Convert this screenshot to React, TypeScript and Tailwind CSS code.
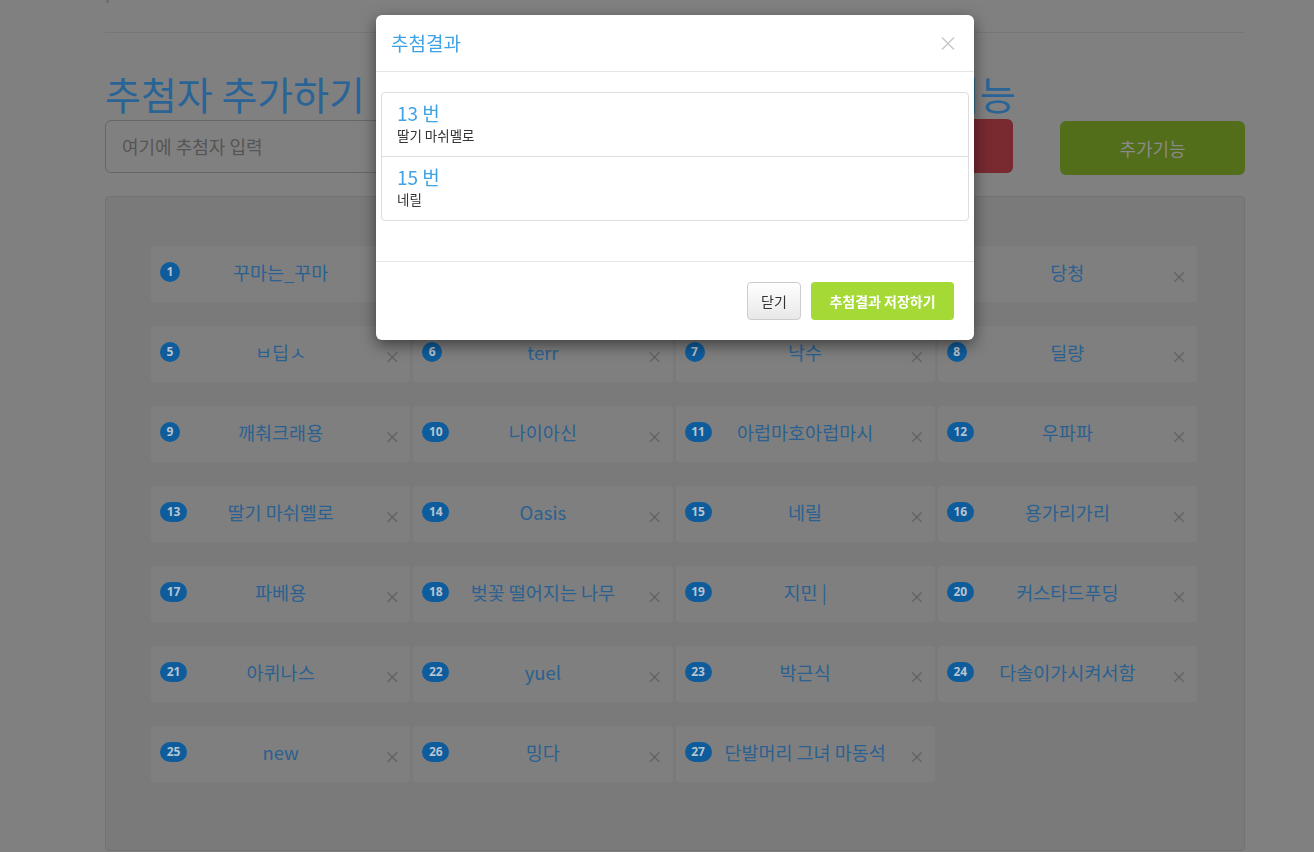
import React from "react";

const names: string[] = [
  "꾸마는_꾸마", "감자", "고구마", "당청",
  "ㅂ딥ㅅ", "terr", "낙수", "딜량",
  "깨춰크래용", "나이아신", "아럽마호아럽마시", "우파파",
  "딸기 마쉬멜로", "Oasis", "네릴", "용가리가리",
  "파베용", "벚꽃 떨어지는 나무", "지민 |", "커스타드푸딩",
  "아퀴나스", "yuel", "박근식", "다솔이가시켜서함",
  "new", "밍다", "단발머리 그녀 마동석",
];

const font = { fontFamily: '"Noto Sans CJK KR", "Noto Sans", sans-serif' };

function Badge({ n }: { n: number }) {
  const two = n >= 10;
  return (
    <span
      className={`flex h-[20px] items-center justify-center rounded-full bg-[#0e5c9b] text-[12px] font-bold leading-none text-[#b8c4d0] ${
        two ? "w-[27px]" : "w-[20px]"
      }`}
      style={{ fontFamily: '"Open Sans", "Noto Sans", sans-serif' }}
    >
      {n}
    </span>
  );
}

function Card({ n, name }: { n: number; name: string }) {
  return (
    <div className="relative flex h-[56px] items-center rounded-[3px] bg-[#7f7f7f]">
      <div className="absolute left-[9px] top-[16px]">
        <Badge n={n} />
      </div>
      <div className="flex-1 pb-[3px] text-center text-[18.5px] text-[#2b6190]">{name}</div>
      <span className="absolute right-[10px] top-[22px] text-[16px] leading-none text-[#5e5e5e]">×</span>
    </div>
  );
}

export default function App() {
  return (
    <div className="relative min-h-[852px] bg-[#808080]" style={font}>
      <div className="ml-[105px] w-[1140px]">
        <div className="ml-[1px] h-[3px] w-[3px] rounded-b bg-[#6e6e6e]" />
        <div className="mt-[29px] h-px bg-[#777]" />
        <div className="flex">
          <div className="w-[750px]">
            <h1 className="mt-[36px] h-[48px] text-[39px] leading-[48px] text-[#2a6496]">추첨자 추가하기</h1>
            <div className="mt-[3px] flex h-[53px] items-center rounded-[6px] border border-[#666] px-[16px] text-[18px] text-[#555]">
              여기에 추첨자 입력
            </div>
          </div>
          <div className="ml-[17px] w-[141px]">
            <h1 className="mt-[36px] h-[48px] whitespace-nowrap text-[39px] leading-[48px] text-[#2a6496]">추첨기능</h1>
            <div className="mt-[2px] flex h-[54px] items-center justify-center rounded-[6px] bg-[#782a30] text-[18px] text-[#888]">
              추첨
            </div>
          </div>
          <div className="ml-[47px] w-[185px]">
            <div className="mt-[38px] h-[48px]" />
            <div className="mt-[2px] flex h-[54px] items-center justify-center rounded-[6px] bg-[#526e1a] text-[18px] text-[#8a8a8a]">
              추가기능
            </div>
          </div>
        </div>
        <div className="mt-[21px] rounded-[4px] border border-[#727272] bg-[#7a7a7a] pb-[68px] pl-[45px] pr-[47px] pt-[49px]">
          <div className="grid grid-cols-4 gap-x-[3px] gap-y-[24px]">
            {names.map((nm, i) => (
              <Card key={i} n={i + 1} name={nm} />
            ))}
          </div>
        </div>
      </div>

      <div className="fixed left-[376px] top-[15px] w-[598px] rounded-[6px] bg-white shadow-[0_5px_15px_rgba(0,0,0,0.5)]">
        <div className="flex h-[57px] items-center justify-between border-b border-[#e5e5e5] px-[15px]">
          <span className="text-[19px] text-[#3fa2e6]">추첨결과</span>
          <span className="mr-[1px] text-[20px] leading-none text-[#c8c8c8]">×</span>
        </div>
        <div className="px-[5px] pb-[40px] pt-[20px]">
          <div className="rounded-[4px] border border-[#ddd]">
            <div className="h-[64px] border-b border-[#ddd] px-[15px] pt-[8px]">
              <div className="text-[19px] leading-[24px] text-[#3fa2e6]">13 번</div>
              <div className="text-[13.5px] leading-[20px] text-[#333]">딸기 마쉬멜로</div>
            </div>
            <div className="h-[63px] px-[15px] pt-[8px]">
              <div className="text-[19px] leading-[24px] text-[#3fa2e6]">15 번</div>
              <div className="text-[13.5px] leading-[20px] text-[#333]">네릴</div>
            </div>
          </div>
        </div>
        <div className="flex justify-end gap-[10px] border-t border-[#e5e5e5] p-[20px]">
          <button className="h-[38px] w-[54px] rounded-[4px] border border-[#ccc] bg-gradient-to-b from-white to-[#e8e8e8] text-[14px] text-[#333]">
            닫기
          </button>
          <button className="h-[38px] w-[143px] rounded-[4px] bg-[#a4d936] text-[14px] font-bold text-white">
            추첨결과 저장하기
          </button>
        </div>
      </div>
    </div>
  );
}
